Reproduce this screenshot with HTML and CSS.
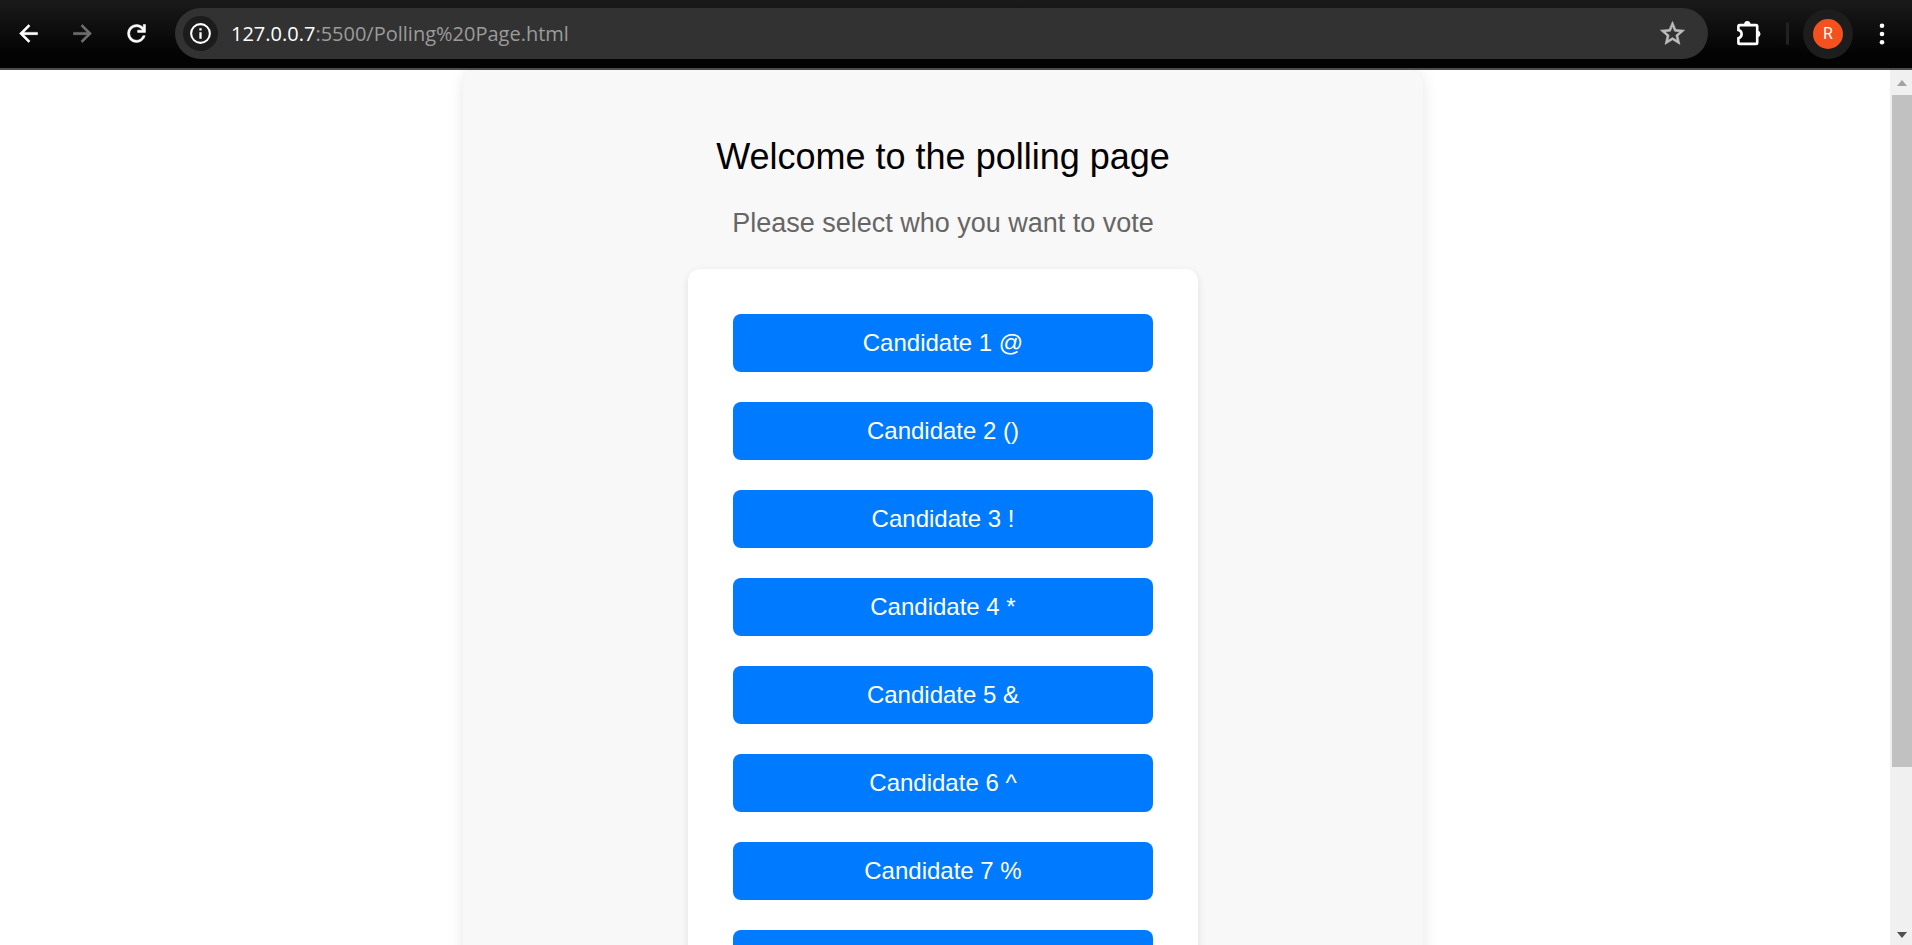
FILE: index.html
```html
<!DOCTYPE html>
<html lang="en">
<head>
  <meta charset="utf-8">
  <title>Polling Page</title>
  <link rel="stylesheet" href="styles.css">
</head>
<body class="window">
  <header class="toolbar">
    <nav class="toolbar-nav" aria-label="Navigation">
      <button class="nav-button" type="button" aria-label="Back">
        <svg class="nav-icon" viewBox="0 0 24 24"><path d="M20 11H7.83l5.59-5.59L12 4l-8 8 8 8 1.41-1.41L7.83 13H20z"/></svg>
      </button>
      <button class="nav-button nav-button-off" type="button" aria-label="Forward" disabled>
        <svg class="nav-icon" viewBox="0 0 24 24"><path d="M4 11h12.17l-5.59-5.59L12 4l8 8-8 8-1.41-1.41L16.17 13H4z"/></svg>
      </button>
      <button class="nav-button" type="button" aria-label="Reload">
        <svg class="nav-icon nav-icon-reload" viewBox="0 -960 960 960"><path d="M480-160q-134 0-227-93t-93-227q0-134 93-227t227-93q69 0 132 28.500T720-690v-110h80v280H520v-80h168q-32-56-87.500-88T480-720q-100 0-170 70t-70 170q0 100 70 170t170 70q77 0 139-44t87-116h84q-28 106-114 173t-196 67Z"/></svg>
      </button>
    </nav>
    <div class="address">
      <button class="site-info" type="button" aria-label="Site information">
        <svg class="info-icon" viewBox="0 0 24 24"><path d="M10.900 10.800h2.200V17h-2.200zM10.900 7h2.200v2.200h-2.200zM12 2a10 10 0 1 0 0 20 10 10 0 0 0 0-20zm0 18a8 8 0 1 1 0-16 8 8 0 0 1 0 16z"/></svg>
      </button>
      <a class="url" href="#"><span class="url-host">127.0.0.7</span>:5500/Polling%20Page.html</a>
      <button class="bookmark" type="button" aria-label="Bookmark this page">
        <svg class="star-icon" viewBox="0 0 24 24"><path d="M22 9.240l-7.190-.62L12 2 9.190 8.630 2 9.240l5.460 4.730L5.820 21 12 17.270 18.180 21l-1.630-7.030L22 9.240zM12 15.400l-3.760 2.270 1-4.280-3.320-2.880 4.380-.38L12 6.100l1.710 4.040 4.380.38-3.320 2.880 1 4.280L12 15.400z"/></svg>
      </button>
    </div>
    <button class="tool-button" type="button" aria-label="Extensions">
      <svg class="tool-icon" viewBox="0 0 28 28">
        <path fill="none" stroke="currentColor" stroke-width="2.600" d="M4.700 5.100H21q1.200 0 1.200 1.200v16.400q0 1.200-1.200 1.200H4.700q-1.300 0-1.300-1.200V18.200c4.300-1 4.300-7.200 0-8.200V6.300q0-1.200 1.300-1.200z"/>
        <path d="M9.100 4.500a3.200 3.500 0 0 1 6.400 0zM23 10.800a3.300 3.300 0 0 1 0 6.400z"/>
      </svg>
    </button>
    <span class="divider"></span>
    <button class="profile" type="button" aria-label="Profile"><span class="avatar">R</span></button>
    <button class="tool-button" type="button" aria-label="Menu">
      <svg class="tool-icon" viewBox="0 0 28 28"><circle cx="14" cy="5.800" r="2.300"/><circle cx="14" cy="14" r="2.300"/><circle cx="14" cy="22.200" r="2.300"/></svg>
    </button>
  </header>

  <div class="viewport">
    <main class="page">
      <section class="container">
        <h1 class="title">Welcome to the polling page</h1>
        <p class="subtitle">Please select who you want to vote</p>
        <form class="card">
          <button class="candidate" type="button">Candidate 1 @</button>
          <button class="candidate" type="button">Candidate 2 ()</button>
          <button class="candidate" type="button">Candidate 3 !</button>
          <button class="candidate" type="button">Candidate 4 *</button>
          <button class="candidate" type="button">Candidate 5 &amp;</button>
          <button class="candidate" type="button">Candidate 6 ^</button>
          <button class="candidate" type="button">Candidate 7 %</button>
          <button class="candidate" type="button" aria-label="Candidate 8"></button>
        </form>
      </section>
    </main>
    <div class="scrollbar" aria-hidden="true">
      <svg class="scroll-arrow scroll-arrow-up" viewBox="0 0 10 6"><path d="M0 6l5-6 5 6z"/></svg>
      <div class="scroll-track"><div class="scroll-thumb"></div></div>
      <svg class="scroll-arrow" viewBox="0 0 10 6"><path d="M0 0h10L5 6z"/></svg>
    </div>
  </div>
</body>
</html>
```

FILE: styles.css
```css
* {
  box-sizing: border-box;
}

.window {
  display: flex;
  flex-direction: column;
  height: 100vh;
  margin: 0;
  overflow: hidden;
  background: #fff;
  font-family: "Liberation Sans", Arial, sans-serif;
}

button {
  display: flex;
  align-items: center;
  justify-content: center;
  padding: 0;
  border: 0;
  background: none;
  color: inherit;
  font: inherit;
}

svg {
  display: block;
  fill: currentColor;
}

/* Browser toolbar */

.toolbar {
  display: flex;
  flex: none;
  align-items: center;
  padding: 8px 16px 9px 1px;
  border-bottom: 2px solid #4c4c4c;
  background: linear-gradient(#1a1a1a, #030303 80%);
  color: #fff;
}

.toolbar-nav {
  display: flex;
  margin-right: 12px;
}

.nav-button {
  width: 54px;
  height: 51px;
}

.nav-button-off {
  color: #6e6e6e;
}

.nav-icon {
  width: 27px;
  height: 27px;
  stroke: currentColor;
  stroke-width: 0.5;
}

.nav-icon-reload {
  stroke-width: 18;
}

.address {
  display: flex;
  flex: 1;
  align-items: center;
  height: 51px;
  margin-right: 27px;
  padding: 0 21px 0 8px;
  border-radius: 26px;
  background: #323232;
}

.site-info {
  width: 35px;
  height: 35px;
  border-radius: 50%;
  background: #1c1c1c;
}

.info-icon {
  width: 25px;
  height: 25px;
}

.url {
  flex: 1;
  margin-left: 13px;
  color: #9b9b9b;
  font-family: "Open Sans", "Noto Sans", sans-serif;
  font-size: 20px;
  line-height: 28px;
  text-decoration: none;
}

.url-host {
  color: #fff;
}

.bookmark {
  color: #bcbcbc;
}

.star-icon {
  width: 29px;
  height: 29px;
  stroke: currentColor;
  stroke-width: 0.5;
}

.tool-icon {
  width: 28px;
  height: 28px;
}

.divider {
  width: 3px;
  height: 23px;
  margin: 0 14px 0 23px;
  border-radius: 2px;
  background: #222;
}

.profile {
  width: 50px;
  height: 50px;
  margin-right: 15px;
  border-radius: 50%;
  background: #1d1d1d;
}

.avatar {
  width: 30px;
  border-radius: 50%;
  background: #f4511e;
  font-family: Roboto, sans-serif;
  font-size: 16px;
  line-height: 30px;
}

/* Polling page */

.viewport {
  display: flex;
  flex: 1;
  min-height: 0;
}

.page {
  flex: 1;
  padding: 0 4px 0 0;
  overflow: hidden;
}

.container {
  max-width: 960px;
  margin: 0 auto;
  padding: 65px 30px;
  border-radius: 15px;
  background: #f8f8f8;
  box-shadow: 0 0 15px rgba(0, 0, 0, 0.1);
  text-align: center;
}

.title {
  margin: 0 0 28px;
  color: #000;
  font-size: 36px;
  font-weight: 400;
  line-height: 44px;
}

.subtitle {
  margin: 0 0 30px;
  color: #666;
  font-size: 27px;
  line-height: 32px;
}

.card {
  display: flex;
  flex-direction: column;
  gap: 30px;
  max-width: 510px;
  margin: 0 auto;
  padding: 45px;
  border-radius: 12px;
  background: #fff;
  box-shadow: 0 3px 8px rgba(0, 0, 0, 0.1);
}

.candidate {
  min-height: 58px;
  padding: 15px;
  border-radius: 8px;
  background: #007bff;
  color: #fff;
  font-size: 24px;
  line-height: 28px;
}

/* Scrollbar */

.scrollbar {
  display: flex;
  flex-direction: column;
  align-items: center;
  width: 22px;
  padding: 10px 0 7px 2px;
  background: #f0f0f0;
}

.scroll-arrow {
  width: 10px;
  height: 6px;
  color: #505050;
}

.scroll-arrow-up {
  color: #a3a3a3;
}

.scroll-track {
  flex: 1;
  width: 100%;
  padding: 9px 0 18px;
}

.scroll-thumb {
  height: 82%;
  background: #c1c1c1;
}
```
